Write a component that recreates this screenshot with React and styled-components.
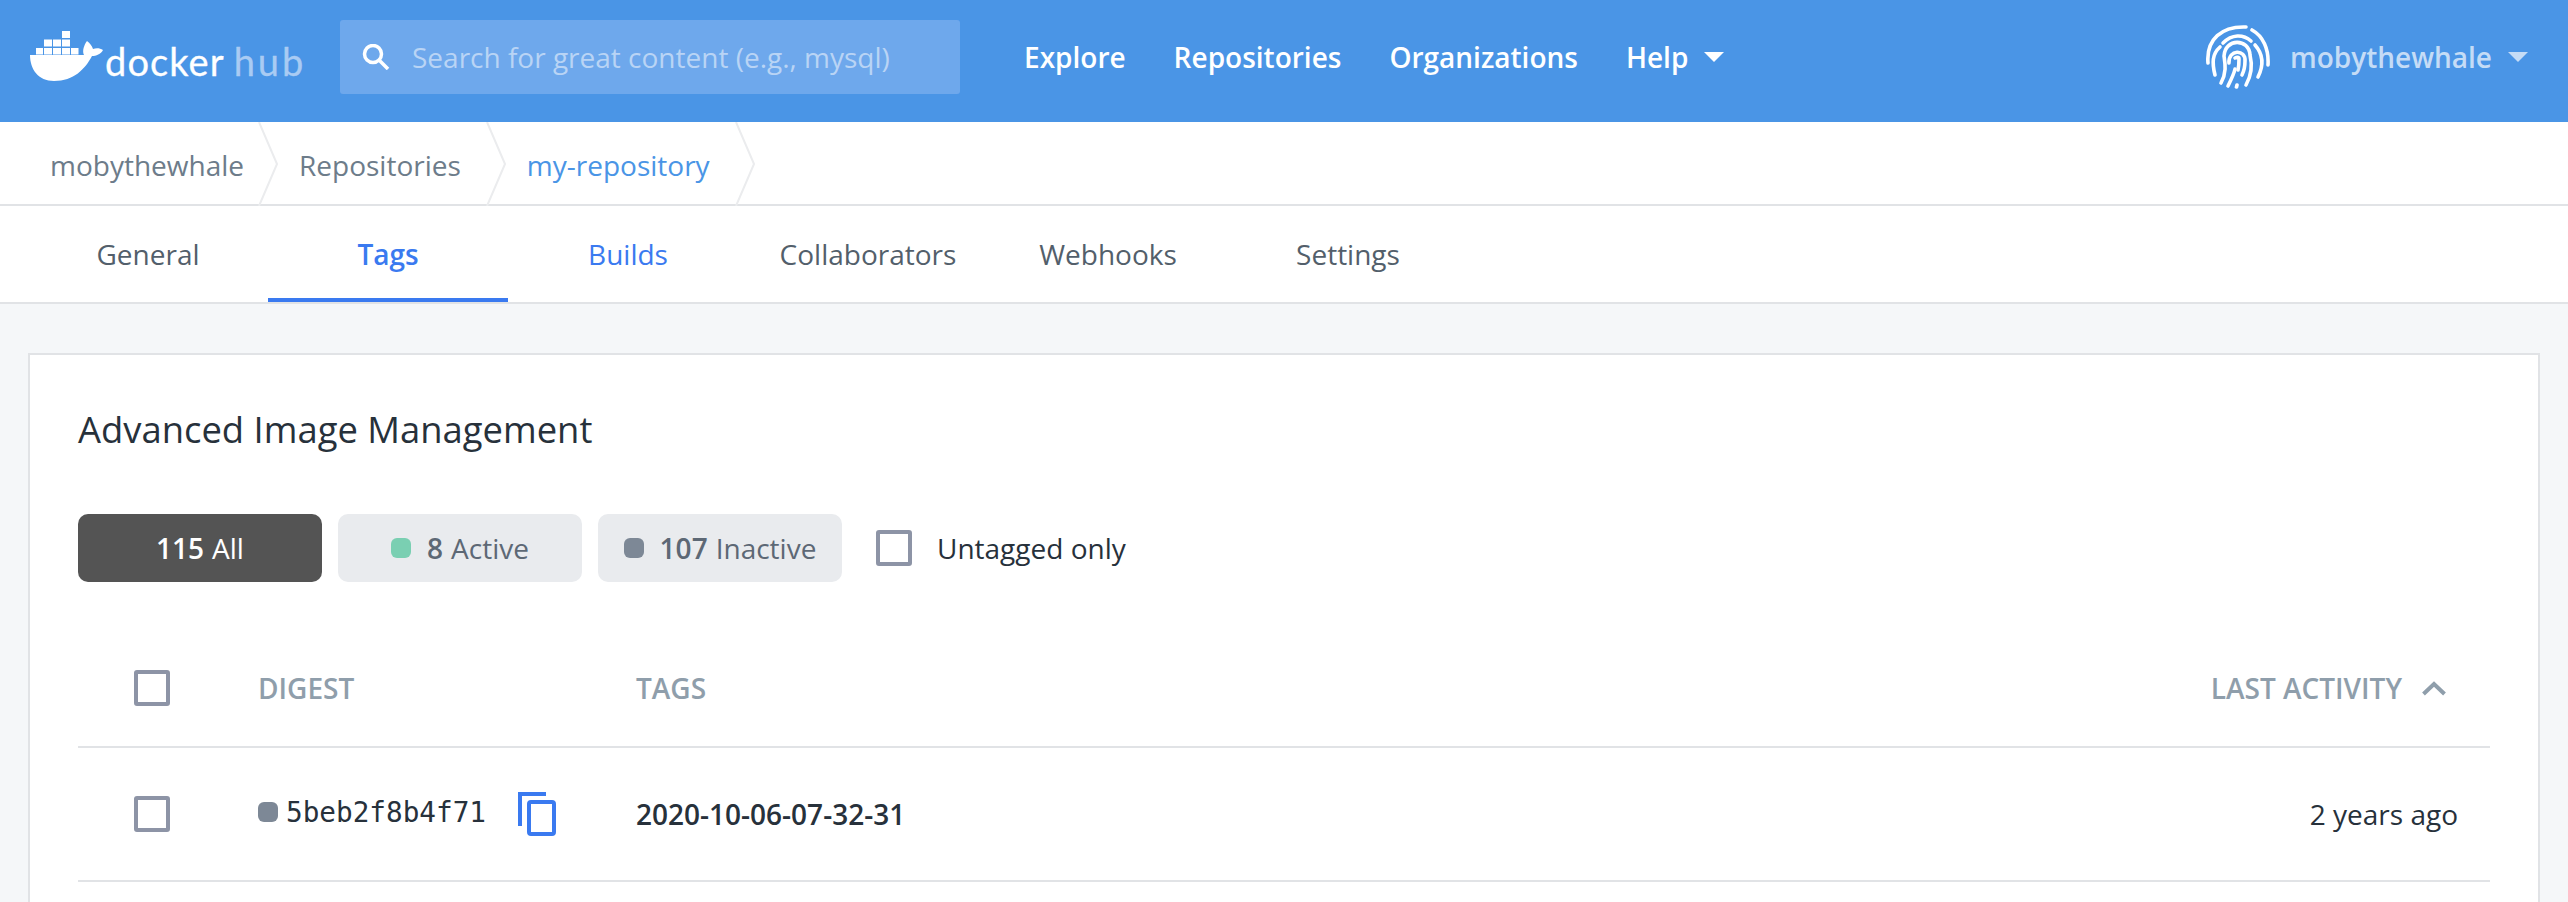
import React from "react";
import styled, { createGlobalStyle } from "styled-components";

const Global = createGlobalStyle`
  html, body { margin: 0; padding: 0; background: #f5f7f9; }
  body { font-family: "Open Sans", sans-serif; height: 902px; overflow: hidden; }
  * { box-sizing: border-box; }
`;

const Whale = () => (
  <LogoMark viewBox="0 0 74 51" width="74" height="51">
    <g fill="#fff">
      <rect x="32" y="0" width="8" height="7" />
      <rect x="14" y="8.500" width="8" height="7" />
      <rect x="23" y="8.500" width="8" height="7" />
      <rect x="32" y="8.500" width="8" height="7" />
      <rect x="6" y="17" width="7" height="6.500" />
      <rect x="14" y="17" width="8" height="6.500" />
      <rect x="23" y="17" width="8" height="6.500" />
      <rect x="32" y="17" width="8" height="6.500" />
      <rect x="41" y="17" width="7.500" height="6.500" />
      <path d="M0 24 H54 C52 20 54 14 57 10 C60 12 62 15 63 18 C66 17 70 17 73 19 C71 23 66 25 62 25 C55 38 44 50 24 50 C8 50 0 38 0 24 Z" />
    </g>
  </LogoMark>
);

const Fingerprint = () => (
  <svg viewBox="0 0 64 64" width="64" height="64" fill="none" stroke="#fff" strokeWidth="3.600" strokeLinecap="round">
    <path d="M2 38 C0 14 16 1 40 2" />
    <path d="M46 5 C57 11 63 24 62 40" />
    <path d="M17 18 C26 9 37 9 45 16" />
    <path d="M14 22 C6 29 6 38 9 50" />
    <path d="M49 20 C57 29 58 40 52 52" />
    <path d="M15 58 C21 47 19 38 18 31 C19 13 43 13 44 30 C47 42 45 51 40 60" />
    <path d="M22 61 C25 55 28 49 29 44" />
    <path d="M23 38 C22 24 40 24 39 36 C39 41 38 46 36 50" />
    <path d="M29 33 C31 32 33 32 33 34 C33 37 33 41 32 45" />
    <path d="M31 60 L30.500 62" />
  </svg>
);

const Caret = ({ color }) => (
  <svg viewBox="0 0 20 10" width="20" height="10">
    <path d="M0 0 H20 L10 10 Z" fill={color} />
  </svg>
);

const Crumb = ({ first }) => (
  <CrumbArrow $first={first} viewBox="0 0 20 84" width="20" height="84" fill="none" stroke="#ebecee" strokeWidth="2">
    <path d="M1 0 L19 42 L1 84" />
  </CrumbArrow>
);

const tabs = ["General", "Tags", "Builds", "Collaborators", "Webhooks", "Settings"];

export default function App() {
  return (
    <Page>
      <Global />
      <Header>
        <Logo>
          <Whale />
          <LogoText>docker<LogoHub>hub</LogoHub></LogoText>
        </Logo>
        <Search>
          <svg viewBox="0 0 28 26" width="28" height="26" fill="none" stroke="#fff" strokeWidth="3.500">
            <circle cx="11" cy="10" r="8.500" />
            <path d="M17 16 L26 25" />
          </svg>
          <SearchHint>Search for great content (e.g., mysql)</SearchHint>
        </Search>
        <Menu>
          <MenuLink>Explore</MenuLink>
          <MenuLink>Repositories</MenuLink>
          <MenuLink>Organizations</MenuLink>
          <MenuLink>Help<Caret color="#fff" /></MenuLink>
        </Menu>
        <User>
          <Fingerprint />
          <UserName>mobythewhale</UserName>
          <Caret color="#c5dcf6" />
        </User>
      </Header>
      <Breadcrumbs>
        <CrumbLink>mobythewhale</CrumbLink>
        <Crumb first />
        <CrumbLink>Repositories</CrumbLink>
        <Crumb />
        <CrumbLink $current>my-repository</CrumbLink>
        <Crumb />
      </Breadcrumbs>
      <Tabs>
        {tabs.map(t => (
          <Tab key={t} $active={t === "Tags"} $blue={t === "Builds"}>{t}</Tab>
        ))}
      </Tabs>
      <Main>
        <Panel>
          <Title>Advanced Image Management</Title>
          <Filters>
            <Filter $selected><b>115</b> All</Filter>
            <Filter><Dot $color="#7acfb2" /><b>8</b> Active</Filter>
            <Filter><Dot $color="#7d8896" /><b>107</b> Inactive</Filter>
            <Check $spaced />
            <CheckLabel>Untagged only</CheckLabel>
          </Filters>
          <HeadRow>
            <CheckCell><Check /></CheckCell>
            <DigestCell><HeadText>DIGEST</HeadText></DigestCell>
            <TagCell><HeadText>TAGS</HeadText></TagCell>
            <ActivityHead>
              <HeadText>LAST ACTIVITY</HeadText>
              <svg viewBox="0 0 24 15" width="24" height="15" fill="none" stroke="#8f9eab" strokeWidth="4">
                <path d="M1.500 13 L12 3 L22.500 13" />
              </svg>
            </ActivityHead>
          </HeadRow>
          <Row>
            <CheckCell><Check /></CheckCell>
            <DigestCell>
              <DigestDot />
              <Digest>5beb2f8b4f71</Digest>
              <CopyIcon viewBox="0 0 38 44" width="38" height="44" fill="none" stroke="#3a7af0" strokeWidth="4">
                <path d="M28 2 H2 V34" />
                <rect x="11" y="10" width="25" height="32" rx="2" />
              </CopyIcon>
            </DigestCell>
            <TagCell><TagName>2020-10-06-07-32-31</TagName></TagCell>
            <Activity>2 years ago</Activity>
          </Row>
        </Panel>
      </Main>
    </Page>
  );
}

const Page = styled.div`
  width: 2568px;
  height: 902px;
  display: flex;
  flex-direction: column;
  overflow: hidden;
`;
const Header = styled.header`
  height: 122px;
  flex: none;
  background: #4a95e6;
  display: flex;
  align-items: center;
  padding: 0 40px 0 30px;
`;
const Logo = styled.div`
  display: flex;
  align-items: flex-start;
  width: 310px;
  height: 52px;
  margin-top: -9px;
`;
const LogoMark = styled.svg`
  flex: none;
`;
const LogoText = styled.span`
  font-family: "Lato", sans-serif;
  font-size: 38px;
  line-height: 46px;
  margin-left: 1px;
  margin-top: 7px;
  color: #fff;
  letter-spacing: 1.100px;
  -webkit-text-stroke: 0.3px currentColor;
`;
const LogoHub = styled.span`
  color: #a9cbf3;
  margin-left: 9px;
  letter-spacing: 2.900px;
`;
const Search = styled.div`
  width: 620px;
  height: 74px;
  margin-top: -8px;
  background: #6ea8ec;
  border-radius: 3px;
  display: flex;
  align-items: center;
  padding: 0 0 0 22px;
  gap: 22px;
`;
const SearchHint = styled.span`
  font-size: 28px;
  color: #b9d4f5;
`;
const Menu = styled.nav`
  display: flex;
  gap: 48px;
  margin-left: 64px;
  margin-top: -8px;
`;
const MenuLink = styled.a`
  display: flex;
  align-items: center;
  gap: 16px;
  font-size: 28px;
  font-weight: 600;
  color: #fff;
`;
const User = styled.div`
  margin-left: auto;
  margin-top: -8px;
  display: flex;
  align-items: center;
  color: #c5dcf6;
  gap: 16px;
`;
const UserName = styled.span`
  font-size: 28px;
  font-weight: 600;
  margin-left: 4px;
`;
const Breadcrumbs = styled.div`
  height: 84px;
  flex: none;
  background: #fff;
  border-bottom: 2px solid #e1e3e6;
  display: flex;
  align-items: flex-start;
  padding-left: 50px;
`;
const CrumbLink = styled.a`
  font-size: 28px;
  line-height: 86px;
  color: ${props => (props.$current ? "#4a95e6" : "#6d7c8a")};
`;
const CrumbArrow = styled.svg`
  flex: none;
  margin: 0 21px 0 ${props => (props.$first ? "14px" : "25px")};
`;
const Tabs = styled.div`
  height: 98px;
  flex: none;
  background: #fff;
  border-bottom: 2px solid #e1e3e6;
  display: flex;
  padding-left: 28px;
`;
const Tab = styled.a`
  width: 240px;
  height: 96px;
  text-align: center;
  font-size: 28px;
  line-height: 97px;
  font-weight: ${props => (props.$active ? 600 : 400)};
  color: ${props => (props.$active || props.$blue ? "#3a7af0" : "#535f6b")};
  border-bottom: 4px solid ${props => (props.$active ? "#3a7af0" : "transparent")};
`;
const Main = styled.main`
  flex: 1;
  padding: 49px 28px 0;
  background: #f5f7f9;
`;
const Panel = styled.section`
  background: #fff;
  border: 2px solid #e1e3e6;
  border-bottom: none;
  height: 600px;
  padding: 0 48px;
`;
const Title = styled.h2`
  margin: 0;
  font-size: 36.400px;
  font-weight: 400;
  line-height: 48px;
  padding-top: 50px;
  height: 159px;
  color: #27313b;
`;
const Filters = styled.div`
  display: flex;
  align-items: center;
  gap: 16px;
  height: 68px;
`;
const Filter = styled.button`
  width: 244px;
  height: 68px;
  border: none;
  border-radius: 10px;
  font-family: inherit;
  font-size: 28px;
  display: flex;
  align-items: center;
  justify-content: center;
  gap: 8px;
  background: ${props => (props.$selected ? "#545454" : "#e9ebee")};
  color: ${props => (props.$selected ? "#fff" : "#5d6875")};
  b { font-weight: 600; }
`;
const Dot = styled.i`
  width: 20px;
  height: 20px;
  border-radius: 6px;
  margin-right: 8px;
  background: ${props => props.$color};
`;
const Check = styled.span`
  display: block;
  width: 36px;
  height: 36px;
  flex: none;
  border: 4px solid #8d94a6;
  border-radius: 3px;
  margin-left: ${props => (props.$spaced ? "18px" : 0)};
`;
const CheckLabel = styled.span`
  font-size: 28px;
  color: #27313b;
  margin-left: 9px;
`;
const HeadRow = styled.div`
  display: flex;
  align-items: center;
  height: 166px;
  padding-top: 48px;
  border-bottom: 2px solid #e1e3e6;
`;
const Row = styled.div`
  display: flex;
  align-items: center;
  height: 134px;
  border-bottom: 2px solid #e1e3e6;
`;
const CheckCell = styled.div`
  width: 180px;
  flex: none;
  padding-left: 56px;
`;
const DigestCell = styled.div`
  width: 378px;
  flex: none;
  display: flex;
  align-items: center;
`;
const TagCell = styled.div`
  flex: 1;
`;
const HeadText = styled.span`
  font-size: 28px;
  font-weight: 600;
  color: #8f9eab;
`;
const ActivityHead = styled.div`
  display: flex;
  align-items: center;
  gap: 20px;
  padding-right: 44px;
`;
const DigestDot = styled.i`
  width: 20px;
  height: 20px;
  border-radius: 6px;
  background: #7d8896;
  margin-top: -4px;
`;
const Digest = styled.span`
  font-family: "DejaVu Sans Mono", monospace;
  font-size: 27.700px;
  color: #27313b;
  margin: -4px 0 0 8px;
`;
const CopyIcon = styled.svg`
  margin-left: 32px;
`;
const TagName = styled.span`
  font-size: 28px;
  font-weight: 600;
  color: #27313b;
`;
const Activity = styled.span`
  font-size: 28px;
  color: #27313b;
  padding-right: 32px;
`;
